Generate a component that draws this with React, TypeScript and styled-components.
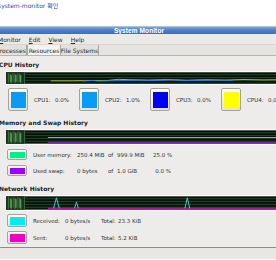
import styled, { createGlobalStyle } from "styled-components"

const GlobalStyle = createGlobalStyle`
    html, body {
        margin: 0;
        padding: 0;
        background: #ffffff;
    }
    body {
        width: 276px;
        height: 260px;
        overflow: hidden;
        font-family: "DejaVu Sans", "Noto Sans CJK KR", sans-serif;
        color: #2a2a2a;
    }
`

const cpus = [
    { name: "CPU1:", value: "0.0%", color: "#0a9bf7" },
    { name: "CPU2:", value: "1.0%", color: "#0a9bf7" },
    { name: "CPU3:", value: "0.0%", color: "#0000f5" },
    { name: "CPU4:", value: "0.0%", color: "#ffff00" },
]

const GraphBase = ({ h, children }: { h: number, children?: any }) => {
    const streaks = [2, 4, 5, 7, 9, 10, 12, 14, 15]
    const rows = []
    for (let y = 2.5; y < h; y += 3) rows.push(y)
    return <svg width={290} height={h} viewBox={`0 0 290 ${h}`}>
        <rect x={0} y={0} width={290} height={h} fill="#08150b" />
        <rect x={0} y={0} width={19} height={h} fill="#1a331d" />
        {streaks.map((x, i) => (
            <line key={i} x1={x + 0.5} x2={x + 0.5} y1={1 + (i % 3)} y2={h - 1 - (i % 2)}
                stroke="#72d172" strokeOpacity={0.45 + (i % 3) * 0.2} />
        ))}
        <line x1={19.5} x2={19.5} y1={0} y2={h} stroke="#3f6b43" />
        {rows.map((y) => <line key={y} x1={20} x2={290} y1={y} y2={y} stroke="#24452a" />)}
        {children}
    </svg>
}

const CpuGraph = () => <GraphBase h={12}>
    <polyline fill="none" stroke="#b9c24a" strokeWidth={1}
        points="47,9 70,9 90,8.6 105,8.8 118,7.4 130,7.8 150,8.2 170,7.6 190,8.4 210,7.8 230,8.2 250,7.6 270,8 290,7.8" />
    <polyline fill="none" stroke="#2f7fe0" strokeWidth={1}
        points="80,9.2 92,8.6 96,9.2 140,8.4 150,8.8 178,8 186,8.8 226,8.2 238,8.8" />
</GraphBase>

const MemGraph = () => <GraphBase h={14}>
    <line x1={44} x2={290} y1={7.5} y2={7.5} stroke="#33dd77" strokeWidth={1.2} />
    <line x1={44} x2={290} y1={12.5} y2={12.5} stroke="#9a1ff0" strokeWidth={1.2} />
</GraphBase>

const NetGraph = () => <GraphBase h={14}>
    <line x1={44} x2={290} y1={12.5} y2={12.5} stroke="#e020c8" strokeWidth={1} />
    <polyline fill="none" stroke="#3fd6d0" points="50,12.5 53,1.5 56,12.5" />
    <polyline fill="none" stroke="#3fd6d0" points="72,12.5 74,6 76,12.5" />
    <polyline fill="none" stroke="#3fd6d0" points="188,12.5 190.5,1.5 193,12.5" />
</GraphBase>

export default function App() {
    return <>
        <GlobalStyle />
        <Page>
            <LinkLine>system-monitor 확인</LinkLine>
            <Window>
                <TitleBar>
                    <span />
                    <TitleText>System Monitor</TitleText>
                    <TitleButtons><MinButton>_</MinButton></TitleButtons>
                </TitleBar>
                <MenuBar>
                    <MenuItem><u>M</u>onitor</MenuItem>
                    <MenuItem><u>E</u>dit</MenuItem>
                    <MenuItem><u>V</u>iew</MenuItem>
                    <MenuItem><u>H</u>elp</MenuItem>
                </MenuBar>
                <TabStrip>
                    <Tab $w={30}>Processes</Tab>
                    <Tab $w={32} $active>Resources</Tab>
                    <Tab $w={37}>File Systems</Tab>
                </TabStrip>
                <Panel>
                    <SectionTitle $top={4}>CPU History</SectionTitle>
                    <GraphFrame><CpuGraph /></GraphFrame>
                    <CpuLegend>
                        {cpus.map((cpu) => (
                            <CpuItem key={cpu.name}>
                                <ColorButton $h={23}><SwatchBox $color={cpu.color} $h={16} /></ColorButton>
                                <CpuName>{cpu.name}</CpuName>
                                <span>{cpu.value}</span>
                            </CpuItem>
                        ))}
                    </CpuLegend>

                    <SectionTitle $top={7}>Memory and Swap History</SectionTitle>
                    <GraphFrame><MemGraph /></GraphFrame>
                    <Legend $top={4} $gap={5}>
                        <MemRow>
                            <ColorButton $h={11}><SwatchBox $color="#00f08a" $h={6} /></ColorButton>
                            <span>User memory:</span>
                            <span>250.4 MiB</span>
                            <span>of</span>
                            <span>999.9 MiB</span>
                            <Percent>25.0 %</Percent>
                        </MemRow>
                        <MemRow>
                            <ColorButton $h={11}><SwatchBox $color="#a000f5" $h={6} /></ColorButton>
                            <span>Used swap:</span>
                            <span>0 bytes</span>
                            <span>of</span>
                            <span>1.0 GiB</span>
                            <Percent>0.0 %</Percent>
                        </MemRow>
                    </Legend>

                    <SectionTitle $top={8}>Network History</SectionTitle>
                    <GraphFrame><NetGraph /></GraphFrame>
                    <Legend $top={3} $gap={4}>
                        <NetRow>
                            <ColorButton $h={13}><SwatchBox $color="#00eef0" $h={8} /></ColorButton>
                            <span>Received:</span>
                            <span>0 bytes/s</span>
                            <span>Total:</span>
                            <span>23.3 KiB</span>
                        </NetRow>
                        <NetRow>
                            <ColorButton $h={13}><SwatchBox $color="#f000c8" $h={8} /></ColorButton>
                            <span>Sent:</span>
                            <span>0 bytes/s</span>
                            <span>Total:</span>
                            <span>5.2 KiB</span>
                        </NetRow>
                    </Legend>
                </Panel>
                <StatusArea />
                <BottomEdge />
            </Window>
        </Page>
    </>
}

const Page = styled.div`
    width: 276px;
    height: 260px;
    overflow: hidden;
    display: flex;
    flex-direction: column;
`

const LinkLine = styled.div`
    height: 26px;
    margin-left: -2px;
    padding-top: 1px;
    box-sizing: border-box;
    font-family: "DejaVu Sans", "Noto Sans CJK KR", sans-serif;
    font-size: 6px;
    line-height: 9px;
    color: #2b3fc4;
    white-space: nowrap;
`

const Window = styled.div`
    width: 286px;
    margin-left: -4px;
    flex: 1;
    display: flex;
    flex-direction: column;
    background: #edeceb;
`

const TitleBar = styled.div`
    height: 8px;
    display: grid;
    grid-template-columns: 1fr auto 1fr;
    align-items: center;
    background: linear-gradient(#7ea6dc, #4f82c9 40%, #3d6fb8);
    border-top: 1px solid #a9c3e8;
    box-sizing: border-box;
`

const TitleText = styled.span`
    font-family: "Liberation Sans", sans-serif;
    font-weight: bold;
    font-size: 6.5px;
    line-height: 7px;
    color: #ffffff;
    letter-spacing: 0.1px;
`

const TitleButtons = styled.div`
    display: flex;
    justify-content: flex-end;
    padding-right: 4px;
`

const MinButton = styled.span`
    font-family: "DejaVu Sans", sans-serif;
    font-size: 6px;
    line-height: 6px;
    color: #dfe9f7;
    font-weight: bold;
`

const MenuBar = styled.div`
    height: 10px;
    display: flex;
    align-items: center;
    gap: 8px;
    padding-left: 2px;
    background: #ebeae7;
`

const MenuItem = styled.span`
    font-family: "DejaVu Sans", sans-serif;
    font-size: 6px;
    color: #2a2a2a;
    u {
        text-decoration-thickness: 0.5px;
    }
`

const TabStrip = styled.div`
    height: 12px;
    display: flex;
    align-items: stretch;
    background: #e6e4e0;
    border-top: 1px solid #d8d6d1;
    border-bottom: 1px solid #b9b6ae;
    box-sizing: border-box;
`

const Tab = styled.div<{ $w: number, $active?: boolean }>`
    width: ${p => p.$w}px;
    display: flex;
    align-items: center;
    justify-content: center;
    font-family: "DejaVu Sans", sans-serif;
    font-size: 6px;
    color: #2a2a2a;
    white-space: nowrap;
    border-right: 1px solid #aaa7a0;
    border-left: ${p => p.$active ? "1px solid #aaa7a0" : "none"};
    background: ${p => p.$active ? "#f4f3f1" : "#e3e1dc"};
`

const Panel = styled.div`
    display: flex;
    flex-direction: column;
    padding-bottom: 3px;
    border-bottom: 1px solid #8f8c86;
`

const SectionTitle = styled.div<{ $top: number }>`
    height: 10px;
    line-height: 10px;
    margin-top: ${p => p.$top}px;
    padding-left: 3px;
    font-family: "DejaVu Sans", sans-serif;
    font-weight: bold;
    font-size: 6px;
    color: #1e1e1e;
`

const GraphFrame = styled.div`
    margin-top: 1px;
    margin-left: 10px;
    display: flex;
    border-top: 1px solid #fbfbfa;
    border-bottom: 1px solid #fbfbfa;
    overflow: hidden;
`

const CpuLegend = styled.div`
    margin-top: 3px;
    margin-left: 12px;
    display: grid;
    grid-template-columns: repeat(4, 71px);
`

const CpuItem = styled.div`
    display: flex;
    align-items: center;
    font-family: "DejaVu Sans", sans-serif;
    font-size: 5.5px;
    color: #333;
`

const CpuName = styled.span`
    width: 21px;
    margin-left: 6px;
`

const ColorButton = styled.div<{ $h: number }>`
    width: 20px;
    height: ${p => p.$h}px;
    box-sizing: border-box;
    display: flex;
    align-items: center;
    justify-content: center;
    border: 1px solid #a6a39c;
    border-radius: 2px;
    background: linear-gradient(#fbfbfa, #e4e2dd);
    flex-shrink: 0;
`

const SwatchBox = styled.div<{ $color: string, $h: number }>`
    width: 15px;
    height: ${p => p.$h}px;
    background: ${p => p.$color};
`

const Legend = styled.div<{ $top: number, $gap: number }>`
    margin-top: ${p => p.$top}px;
    margin-left: 11px;
    display: flex;
    flex-direction: column;
    gap: ${p => p.$gap}px;
`

const MemRow = styled.div`
    display: grid;
    grid-template-columns: 20px 50px 31px 9px 36px 18px;
    align-items: center;
    font-family: "DejaVu Sans", sans-serif;
    font-size: 5.5px;
    color: #333;
    white-space: nowrap;
    & > :nth-child(2) {
        margin-left: 6px;
    }
`

const Percent = styled.span`
    text-align: right;
`

const NetRow = styled.div`
    display: grid;
    grid-template-columns: 20px 38px 36px 17px 40px;
    align-items: center;
    font-family: "DejaVu Sans", sans-serif;
    font-size: 5.5px;
    color: #333;
    white-space: nowrap;
    & > :nth-child(2) {
        margin-left: 6px;
    }
`

const StatusArea = styled.div`
    height: 11px;
    background: #e9e7e3;
`

const BottomEdge = styled.div`
    flex: 1;
    border-top: 1px solid #ffffff;
    background: #f3f3f2;
`
